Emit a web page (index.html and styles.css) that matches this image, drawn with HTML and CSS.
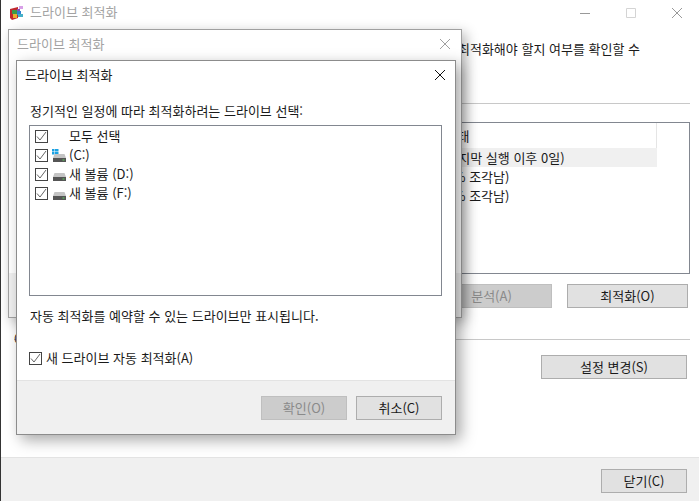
FILE: index.html
```html
<!DOCTYPE html>
<html lang="ko">
<head>
<meta charset="utf-8">
<title>드라이브 최적화</title>
<link rel="stylesheet" href="styles.css">
</head>
<body>
<div class="desktop">
  <div class="window main">
    <div class="titlebar">
      <svg class="appicon" width="16" height="16" viewBox="0 0 16 16"><path d="M1 4l8-2v11l-6 2-2-2z" fill="#c0282e"/><path d="M3 5h5v4H3z" fill="#3c9a48"/><path d="M8 6h4v4H8z" fill="#2f7fd0"/><path d="M4 9h4v4H4z" fill="#e8b030"/><path d="M9 9h5v3H9z" fill="#46b0c8"/><path d="M10 1h4v3h-4z" fill="#d8a0e8"/><path d="M8 4h3v2H8z" fill="#8a4fb0"/></svg>
      <span class="title-muted main-title">드라이브 최적화</span>
      <div class="caption">
        <svg width="12" height="12" viewBox="0 0 12 12"><path d="M1 6.5h10" stroke="#999" fill="none"/></svg>
        <svg width="12" height="12" viewBox="0 0 12 12"><path d="M1.5 1.5h9v9h-9z" stroke="#d4d4d4" fill="none"/></svg>
        <svg width="12" height="12" viewBox="0 0 12 12"><path d="M1 1l10 10M11 1L1 11" stroke="#999" fill="none"/></svg>
      </div>
    </div>
    <div class="main-body">
      <p class="intro">드라이브를 최적화하여 컴퓨터 효율을 높이거나 최적화해야 할지 여부를 확인할 수</p>
      <div class="listbox">
        <div class="lrow lhead"><span>현재 상태</span></div>
        <div class="lrow selected"><span>확인(마지막 실행 이후 0일)</span></div>
        <div class="lrow"><span>확인(0% 조각남)</span></div>
        <div class="lrow"><span>확인(0% 조각남)</span></div>
      </div>
      <div class="actions">
        <button class="btn disabled wide">분석(A)</button>
        <button class="btn wide">최적화(O)</button>
      </div>
      <div class="schedule">
        <span class="section-label">예약된 최적화</span>
        <button class="btn settings">설정 변경(S)</button>
      </div>
    </div>
    <div class="footer main-footer"><button class="btn">닫기(C)</button></div>
  </div>

  <div class="window middle">
    <div class="dlg-title">
      <span class="title-muted">드라이브 최적화</span>
      <svg width="12" height="12" viewBox="0 0 12 12"><path d="M1 1l10 10M11 1L1 11" stroke="#a0a0a0" fill="none"/></svg>
    </div>
    <div class="middle-fill"></div>
    <div class="middle-foot"></div>
  </div>

  <div class="window front">
    <div class="dlg-title front-title">
      <span>드라이브 최적화</span>
      <svg width="12" height="12" viewBox="0 0 12 12"><path d="M1 1l10 10M11 1L1 11" stroke="#111" fill="none"/></svg>
    </div>
    <div class="front-body">
      <p class="lead">정기적인 일정에 따라 최적화하려는 드라이브 선택:</p>
      <div class="drives">
        <div class="drive">
          <span class="check"><svg width="11" height="11" viewBox="0 0 11 11"><path d="M1 5.500l3 3.500 6-8" stroke="#666" fill="none"/></svg></span>
          <span class="drive-icon"></span>
          <span class="drive-name">모두 선택</span>
        </div>
        <div class="drive">
          <span class="check"><svg width="11" height="11" viewBox="0 0 11 11"><path d="M1 5.500l3 3.500 6-8" stroke="#666" fill="none"/></svg></span>
          <svg class="drive-icon" width="15" height="14" viewBox="0 0 15 14"><path d="M0 0h2.500v2.500H0zM3 -.5h3.500v3H3zM0 3h2.500v2.500H0zM3 3h3.500v2.500H3z" fill="#1ba1e2"/><path d="M2.500 5h10l1.500 4H1z" fill="#c4c4c4"/><path d="M1 9h13v4H1z" fill="#555"/><path d="M10.500 10.500h2v1h-2z" fill="#5fd35f"/></svg>
          <span class="drive-name">(C:)</span>
        </div>
        <div class="drive">
          <span class="check"><svg width="11" height="11" viewBox="0 0 11 11"><path d="M1 5.500l3 3.500 6-8" stroke="#666" fill="none"/></svg></span>
          <svg class="drive-icon" width="15" height="14" viewBox="0 0 15 14"><path d="M2.500 5h10l1.500 4H1z" fill="#c4c4c4"/><path d="M1 9h13v4H1z" fill="#555"/><path d="M10.500 10.500h2v1h-2z" fill="#5fd35f"/></svg>
          <span class="drive-name">새 볼륨 (D:)</span>
        </div>
        <div class="drive">
          <span class="check"><svg width="11" height="11" viewBox="0 0 11 11"><path d="M1 5.500l3 3.500 6-8" stroke="#666" fill="none"/></svg></span>
          <svg class="drive-icon" width="15" height="14" viewBox="0 0 15 14"><path d="M2.500 5h10l1.500 4H1z" fill="#c4c4c4"/><path d="M1 9h13v4H1z" fill="#555"/><path d="M10.500 10.500h2v1h-2z" fill="#5fd35f"/></svg>
          <span class="drive-name">새 볼륨 (F:)</span>
        </div>
      </div>
      <p class="note">자동 최적화를 예약할 수 있는 드라이브만 표시됩니다.</p>
      <div class="auto">
        <span class="check"><svg width="11" height="11" viewBox="0 0 11 11"><path d="M1 5.500l3 3.500 6-8" stroke="#666" fill="none"/></svg></span>
        <span>새 드라이브 자동 최적화(A)</span>
      </div>
    </div>
    <div class="footer front-footer">
      <button class="btn disabled">확인(O)</button>
      <button class="btn">취소(C)</button>
    </div>
  </div>
</div>
</body>
</html>
```
FILE: styles.css
```css
* { box-sizing: border-box; }
html, body { margin: 0; padding: 0; }
body { width: 699px; height: 501px; overflow: hidden; background: #333; font-family: "Noto Sans CJK KR", "Noto Sans", sans-serif; font-size: 13px; line-height: 16px; color: #1a1a1a; }
p { margin: 0; }
.desktop { position: relative; width: 699px; height: 501px; }
.window { position: absolute; background: #fff; display: flex; flex-direction: column; }
.main { left: 1px; top: 0; width: 698px; height: 501px; }
.middle { left: 8px; top: 29px; width: 454px; height: 289px; border: 1px solid #a0a0a0; box-shadow: 4px 4px 12px rgba(0,0,0,.3); }
.front { left: 16px; top: 60px; width: 440px; height: 375px; border: 1px solid #8c8c8c; box-shadow: 5px 5px 14px rgba(0,0,0,.35); }

.titlebar { height: 26px; display: flex; align-items: center; padding-left: 8px; flex: none; }
.appicon { margin-right: 5px; }
.title-muted { color: #a3a3a3; }
.main-title { margin-bottom: 3px; }
.caption { margin-left: auto; display: flex; gap: 34px; padding-right: 16px; }

.main-body { flex: 1; padding: 0 9px 0 13px; display: flex; flex-direction: column; }
.intro { height: 78px; padding: 15px 50px 0 0; text-align: right; border-bottom: 1px solid #c8c8c8; white-space: nowrap; }
.listbox { margin-top: 18px; height: 152px; border: 1px solid #828790; padding-right: 32px; }
.lrow { height: 19px; display: flex; align-items: center; padding-left: 403px; white-space: nowrap; }
.lhead { height: 25px; border-right: 1px solid #e5e5e5; }
.selected { background: #f0f0f0; }

.actions { margin-top: 10px; display: flex; justify-content: flex-end; gap: 15px; padding-right: 2px; }
.btn { width: 86px; height: 24px; padding: 0; border: 1px solid #adadad; background: #e1e1e1; font: inherit; color: #1a1a1a; flex: none; }
.btn.disabled { background: #ccc; border-color: #bfbfbf; color: #8a8a8a; }
.btn.wide { width: 121px; }
.schedule { margin-top: 31px; border-top: 1px solid #c8c8c8; padding-top: 15px; display: flex; justify-content: space-between; padding-right: 3px; }
.section-label { margin-top: -24px; white-space: nowrap; }
.btn.settings { width: 146px; }

.footer { background: #f0f0f0; border-top: 1px solid #e3e3e3; display: flex; justify-content: flex-end; flex: none; }
.main-footer { height: 44px; padding: 11px 12px 0 0; }
.front-footer { height: 54px; padding: 15px 13px 0 0; gap: 9px; }

.dlg-title { height: 29px; display: flex; align-items: center; justify-content: space-between; padding: 0 10px 0 8px; flex: none; }
.middle .dlg-title { height: 28px; }
.front-title { height: 28px; padding: 0 9px 0 8px; margin-bottom: 1px; }
.middle-fill { flex: 1; }
.middle-foot { height: 44px; background: #f0f0f0; flex: none; }

.front-body { flex: 1; padding: 0 13px 0 12px; display: flex; flex-direction: column; }
.lead { margin-top: 13px; padding-left: 1px; }
.drives { margin-top: 6px; height: 171px; border: 1px solid #828790; padding: 1px 5px; }
.drive { height: 19px; display: flex; align-items: center; }
.drive .check { margin-right: 4px; }
.drive-icon { width: 15px; height: 14px; margin-right: 2px; flex: none; }
.drive-name { margin-bottom: 2px; }
.check { width: 13px; height: 13px; border: 1px solid #444; background: #fff; display: inline-flex; flex: none; }
.note { margin-top: 12px; padding-left: 1px; }
.auto { margin-top: 26px; display: flex; align-items: center; gap: 4px; }
```
